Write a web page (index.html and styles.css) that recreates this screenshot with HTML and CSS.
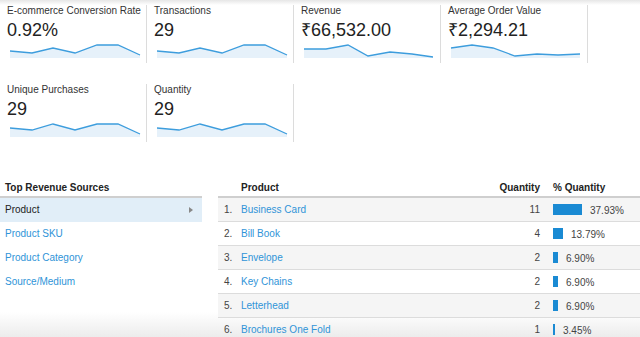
FILE: index.html
```html
<!DOCTYPE html>
<html>
<head>
<meta charset="utf-8">
<link rel="stylesheet" href="styles.css">
</head>
<body>
<div class="page">
  <div class="cards">
    <div class="card">
      <div class="label">E-commerce Conversion Rate</div>
      <div class="value">0.92%</div>
      <svg class="spark" viewBox="0 0 132 16" width="132" height="16"><polygon class="area" points="1,8 23,10 44,5 66,10 88,2 109,2 131,12 131,15 1,15"/><polyline class="line" points="1,8 23,10 44,5 66,10 88,2 109,2 131,12"/></svg>
    </div>
    <div class="card">
      <div class="label">Transactions</div>
      <div class="value">29</div>
      <svg class="spark" viewBox="0 0 132 16" width="132" height="16"><polygon class="area" points="1,8 23,10 44,5 66,10 88,2 109,2 131,12 131,15 1,15"/><polyline class="line" points="1,8 23,10 44,5 66,10 88,2 109,2 131,12"/></svg>
    </div>
    <div class="card">
      <div class="label">Revenue</div>
      <div class="value">₹66,532.00</div>
      <svg class="spark" viewBox="0 0 132 16" width="132" height="16"><polygon class="area" points="1,6 23,6 45,2 65,13 87,9 109,11 130,14 130,15 1,15"/><polyline class="line" points="1,6 23,6 45,2 65,13 87,9 109,11 130,14"/></svg>
    </div>
    <div class="card">
      <div class="label">Average Order Value</div>
      <div class="value">₹2,294.21</div>
      <svg class="spark" viewBox="0 0 132 16" width="132" height="16"><polygon class="area" points="1,5 22,2 43,5 65,13 87,11 108,12 130,11 130,15 1,15"/><polyline class="line" points="1,5 22,2 43,5 65,13 87,11 108,12 130,11"/></svg>
    </div>
    <div class="card">
      <div class="label">Unique Purchases</div>
      <div class="value">29</div>
      <svg class="spark" viewBox="0 0 132 16" width="132" height="16"><polygon class="area" points="1,6 23,8 44,2 66,8 88,2 109,2 131,12 131,15 1,15"/><polyline class="line" points="1,6 23,8 44,2 66,8 88,2 109,2 131,12"/></svg>
    </div>
    <div class="card">
      <div class="label">Quantity</div>
      <div class="value">29</div>
      <svg class="spark" viewBox="0 0 132 16" width="132" height="16"><polygon class="area" points="1,6 23,8 44,2 66,8 88,2 109,2 131,12 131,15 1,15"/><polyline class="line" points="1,6 23,8 44,2 66,8 88,2 109,2 131,12"/></svg>
    </div>
  </div>

  <div class="bottom">
    <div class="sources">
      <div class="src-head">Top Revenue Sources</div>
      <div class="src-row active"><span>Product</span><span class="caret"></span></div>
      <div class="src-row"><span>Product SKU</span></div>
      <div class="src-row"><span>Product Category</span></div>
      <div class="src-row"><span>Source/Medium</span></div>
    </div>

    <table class="prod">
      <thead>
        <tr><th class="c-num"></th><th class="c-name">Product</th><th class="c-qty">Quantity</th><th class="c-pct">% Quantity</th></tr>
      </thead>
      <tbody>
        <tr><td class="c-num">1.</td><td class="c-name">Business Card</td><td class="c-qty">11</td><td class="c-pct"><span class="bar" style="width:29px"></span><span>37.93%</span></td></tr>
        <tr><td class="c-num">2.</td><td class="c-name">Bill Book</td><td class="c-qty">4</td><td class="c-pct"><span class="bar" style="width:10px"></span><span>13.79%</span></td></tr>
        <tr><td class="c-num">3.</td><td class="c-name">Envelope</td><td class="c-qty">2</td><td class="c-pct"><span class="bar" style="width:5px"></span><span>6.90%</span></td></tr>
        <tr><td class="c-num">4.</td><td class="c-name">Key Chains</td><td class="c-qty">2</td><td class="c-pct"><span class="bar" style="width:5px"></span><span>6.90%</span></td></tr>
        <tr><td class="c-num">5.</td><td class="c-name">Letterhead</td><td class="c-qty">2</td><td class="c-pct"><span class="bar" style="width:5px"></span><span>6.90%</span></td></tr>
        <tr><td class="c-num">6.</td><td class="c-name">Brochures One Fold</td><td class="c-qty">1</td><td class="c-pct"><span class="bar" style="width:2px"></span><span>3.45%</span></td></tr>
      </tbody>
    </table>
  </div>
  <div class="fade-top"></div>
</div>
</body>
</html>
```

FILE: styles.css
```css
html, body {
  margin: 0;
  padding: 0;
  background: #fff;
}
body {
  font-family: "Liberation Sans", Arial, sans-serif;
  color: #333;
  width: 640px;
  height: 337px;
  overflow: hidden;
}
.page {
  position: relative;
  width: 640px;
  height: 337px;
  overflow: hidden;
  background: linear-gradient(#fff 0, #fff 312px, #ececec 337px);
}
.cards {
  display: grid;
  grid-template-columns: repeat(4, 147px);
  row-gap: 21px;
  padding-top: 5px;
}
.card {
  box-sizing: border-box;
  height: 58px;
  padding-left: 7px;
  border-right: 1px solid #dcdcdc;
}
.label {
  font-size: 10px;
  line-height: 12px;
  color: #333;
}
.value {
  font-size: 18px;
  line-height: 22px;
  color: #222;
  margin-top: 2px;
}
.spark {
  display: block;
  margin-left: 2px;
  margin-top: 2px;
}
.spark .area {
  fill: #e6f1fa;
}
.spark .line {
  fill: none;
  stroke: #3d9ddd;
  stroke-width: 1.3;
}
.bottom {
  display: flex;
  margin-top: 38px;
  align-items: flex-start;
}
.sources {
  width: 202px;
  flex: none;
  font-size: 10px;
}
.src-head {
  font-weight: bold;
  color: #222;
  height: 16px;
  line-height: 16px;
  padding-left: 5px;
  border-bottom: 2px solid #cfcfcf;
}
.src-row {
  display: flex;
  align-items: center;
  justify-content: space-between;
  height: 23px;
  border-bottom: 1px solid transparent;
  padding: 0 9px 0 5px;
  color: #2f94d8;
}
.src-row.active {
  background: #e1eef8;
  color: #222;
}
.caret {
  width: 0;
  height: 0;
  border-left: 4px solid #888;
  border-top: 3px solid transparent;
  border-bottom: 3px solid transparent;
}
.prod {
  margin-left: 16px;
  width: 422px;
  border-collapse: collapse;
  font-size: 10px;
  table-layout: fixed;
}
.prod th {
  font-weight: bold;
  color: #222;
  height: 16px;
  line-height: 16px;
  padding: 0;
  text-align: left;
  border-bottom: 2px solid #cfcfcf;
}
.prod td {
  height: 23px;
  padding: 0;
  border-bottom: 1px solid #dcdcdc;
  color: #444;
}
.prod tbody tr:nth-child(odd) td {
  background: #f5f5f5;
}
.c-num {
  width: 23px;
  text-align: right;
  padding-right: 9px !important;
  box-sizing: border-box;
}
.prod td.c-num {
  text-align: left;
  padding-left: 6px !important;
}
.prod td.c-name {
  color: #2f94d8;
}
.prod th.c-qty, .prod td.c-qty {
  width: 70px;
  text-align: right;
}
.c-pct {
  width: 100px;
  padding-left: 13px !important;
  box-sizing: border-box;
}
.prod td.c-pct {
  white-space: nowrap;
}
.bar {
  display: inline-block;
  height: 11px;
  background: #1a8ad3;
  vertical-align: middle;
  margin-right: 8px;
}
.prod td.c-pct span:last-child {
  vertical-align: middle;
}
.fade-top {
  position: absolute;
  left: 0;
  top: 0;
  width: 640px;
  height: 5px;
  background: linear-gradient(#e6e6e6, rgba(255,255,255,0));
}
```
